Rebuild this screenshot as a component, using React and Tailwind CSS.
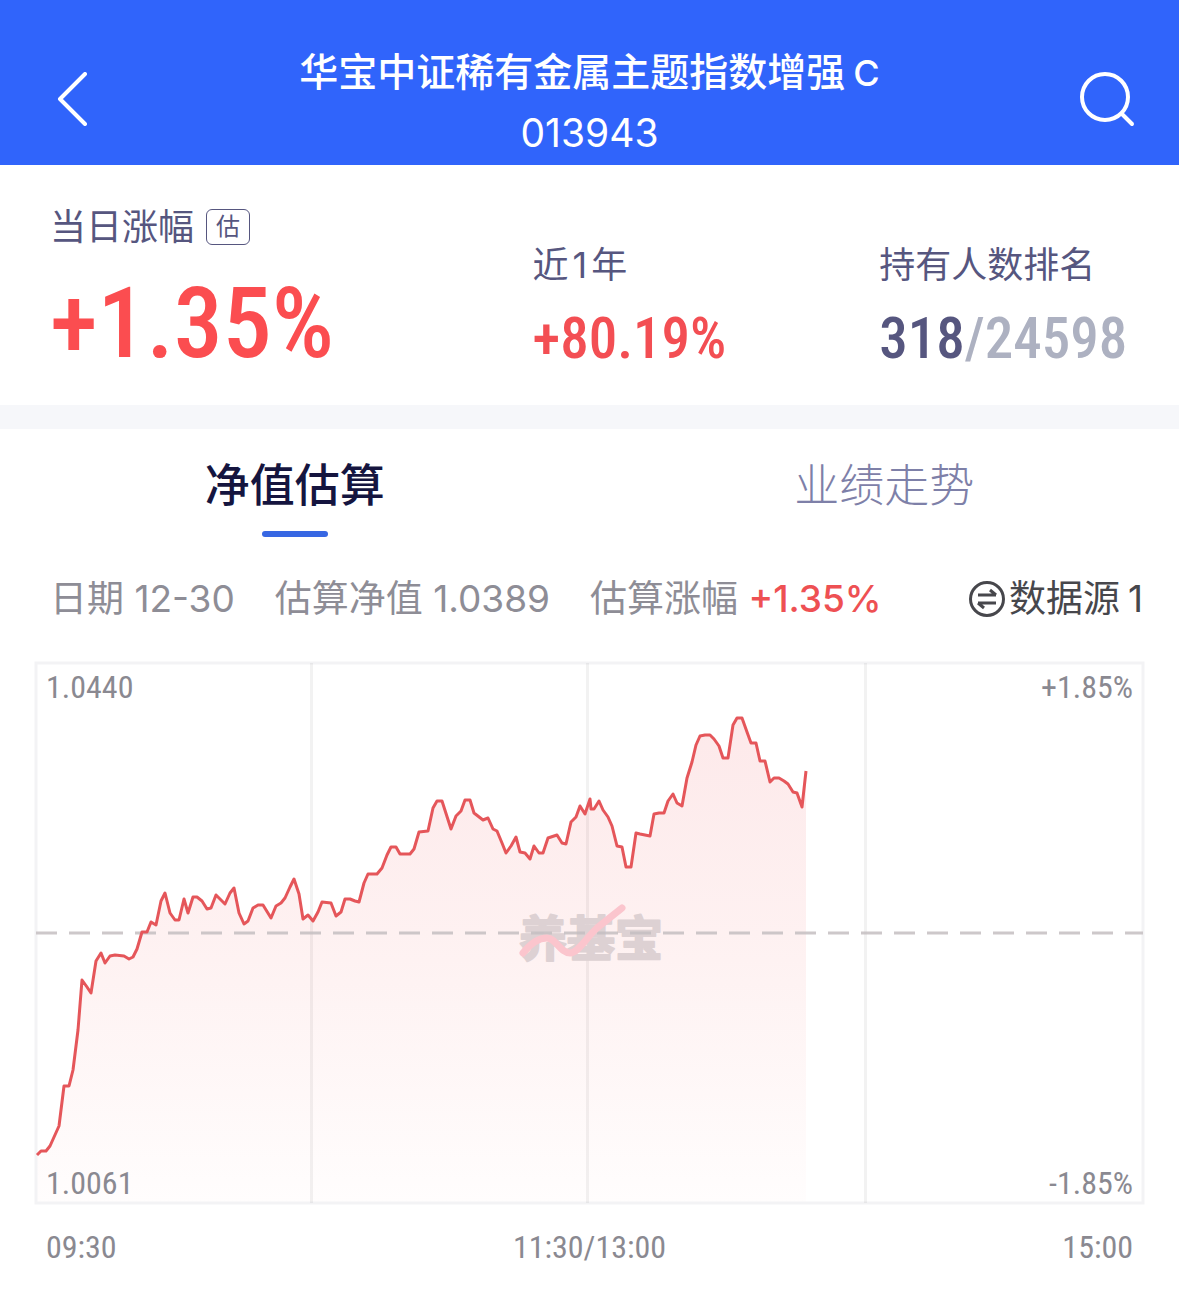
import React, { useState } from 'react'

const TABS = ['净值估算', '业绩走势']

// [x, y] samples of the intraday estimate
const POINTS = [
  [37, 1155], [41, 1151], [46, 1151], [50, 1146], [59, 1126], [64, 1086], [69, 1086], [73, 1070], [78, 1030], [82, 980],
  [87, 987], [91, 993], [96, 961], [101, 953], [105, 963], [110, 956], [115, 955], [124, 956], [129, 959], [133, 957],
  [137, 949], [142, 932], [147, 932], [151, 922], [156, 925], [161, 901], [165, 893], [170, 913], [175, 920], [179, 920],
  [184, 899], [188, 913], [193, 897], [197, 897], [202, 901], [207, 909], [211, 908], [216, 895], [225, 904], [230, 893],
  [234, 888], [239, 913], [244, 924], [248, 921], [253, 908], [258, 905], [263, 905], [271, 918], [276, 906], [281, 903],
  [285, 898], [290, 887], [294, 879], [299, 894], [303, 919], [308, 915], [313, 921], [318, 912], [322, 902], [331, 903],
  [336, 916], [341, 912], [345, 899], [350, 899], [355, 901], [359, 902], [364, 883], [368, 874], [377, 874], [382, 868],
  [387, 855], [391, 847], [396, 847], [400, 854], [410, 854], [414, 849], [419, 832], [428, 831], [433, 808], [437, 801],
  [442, 801], [451, 829], [456, 816], [461, 811], [465, 800], [470, 800], [474, 813], [483, 820], [488, 818], [493, 829],
  [497, 831], [502, 843], [506, 853], [511, 846], [516, 837], [520, 852], [525, 853], [530, 859], [534, 846], [539, 853],
  [543, 853], [548, 838], [557, 835], [562, 843], [566, 844], [571, 822], [576, 817], [580, 806], [585, 814], [590, 799],
  [591, 809], [594, 809], [599, 801], [603, 810], [608, 817], [612, 826], [617, 846], [622, 847], [626, 867], [631, 867],
  [636, 833], [640, 834], [645, 835], [650, 836], [654, 814], [659, 813], [664, 813], [668, 801], [673, 794], [677, 803],
  [682, 806], [687, 778], [692, 762], [696, 745], [700, 736], [705, 735], [710, 735], [714, 739], [719, 746], [723, 758],
  [728, 758], [733, 725], [737, 718], [742, 718], [747, 732], [751, 743], [756, 743], [760, 761], [765, 761], [770, 782],
  [774, 778], [779, 778], [784, 781], [788, 784], [793, 792], [797, 793], [802, 807], [806, 771],
]

const EstimateChart = () => {
  const line = POINTS.map(([x, y]) => `${x},${y}`).join(' ')

  return (
    <svg className="block w-full h-auto" viewBox="34 661 1111 544" fill="none">
      <defs>
        <linearGradient id="area" x1="0" y1="718" x2="0" y2="1203" gradientUnits="userSpaceOnUse">
          <stop offset="0" stopColor="#fde9ea" />
          <stop offset="0.5" stopColor="#fef2f2" />
          <stop offset="1" stopColor="#fffdfd" />
        </linearGradient>
      </defs>
      <polygon points={`37,1203 ${line} 806,1203`} fill="url(#area)" />

      {/* Grid */}
      <rect x="36" y="663" width="1107" height="540" stroke="#f3f3f5" strokeWidth="3" />
      <path d="M311.500 663V1203M587.500 663V1203M865.500 663V1203" stroke="#000" strokeOpacity="0.05" strokeWidth="3" />

      {/* Watermark */}
      <text
        x="519"
        y="956"
        className="font-['Noto_Sans_CJK_SC',sans-serif] font-bold text-[48px]"
        fill="#ddd1d3"
        stroke="#ddd1d3"
        strokeWidth="2"
        strokeLinejoin="round"
      >
        养基宝
      </text>
      <path d="M36 933H1143" stroke="#c4bec1" strokeOpacity="0.85" strokeWidth="3" strokeDasharray="21 12" />
      <path d="M523 953Q535 938 547 938C556 938 560 953 570 953C578 953 586 938 597 928L622 908" stroke="#fbc5cd" strokeWidth="7" strokeLinecap="round" />

      <polyline points={line} stroke="#e5565a" strokeWidth="3" strokeLinejoin="round" />
    </svg>
  )
}

const App = () => {
  const [tab, setTab] = useState(TABS[0])

  return (
    <div className="min-h-screen bg-white font-['Inter','Noto_Sans_CJK_SC',sans-serif]">
      {/* Header */}
      <header className="flex items-center justify-between h-[165px] pt-8 px-11 bg-[#3064fb] text-white">
        <button type="button" aria-label="返回" className="p-3">
          <svg className="w-8 h-[54px]" viewBox="0 0 32 54" fill="none" stroke="currentColor" strokeWidth="4" strokeLinecap="round" strokeLinejoin="round">
            <path d="M29 2L4 27L29 52" />
          </svg>
        </button>
        <div className="pt-2 text-center">
          <h1 className="text-[39px] leading-[60px] font-medium">
            华宝中证稀有金属主题指数增强<span className="ml-2 text-[36px]">C</span>
          </h1>
          <p className="text-[39px] leading-[60px]">013943</p>
        </div>
        <button type="button" aria-label="搜索">
          <svg className="w-14 h-14" viewBox="0 0 56 56" fill="none" stroke="currentColor" strokeWidth="4" strokeLinecap="round">
            <circle cx="26" cy="26" r="23" />
            <path d="M43 43L53 53" />
          </svg>
        </button>
      </header>

      {/* Summary */}
      <section className="grid grid-cols-[483fr_347fr_250fr] items-end px-[50px] pt-8 pb-[14px] text-[36px] text-[#56567f]">
        <div>
          <div className="flex items-center gap-3 leading-[60px]">
            当日涨幅
            <span className="flex items-center justify-center w-11 h-9 border border-[#56567f] rounded-md text-[24px]">估</span>
          </div>
          <div className="font-['Roboto_Condensed','Roboto',sans-serif] font-medium text-[98px] leading-[134px] text-[#fb4d50]">+1.35%</div>
        </div>
        <div className="pb-2">
          <div className="leading-[60px]">
            近<span className="mx-1">1</span>年
          </div>
          <div className="font-['Roboto_Condensed','Roboto',sans-serif] font-medium text-[57px] leading-[88px] text-[#f34e53]">+80.19%</div>
        </div>
        <div className="pb-2">
          <div className="leading-[60px] whitespace-nowrap">持有人数排名</div>
          <div className="font-['Roboto_Condensed','Roboto',sans-serif] font-medium text-[57px] leading-[88px] whitespace-nowrap">
            318<span className="text-[#adb1c1]">/24598</span>
          </div>
        </div>
      </section>

      <div className="h-6 bg-[#f6f7fa]" />

      {/* Tabs */}
      <div role="tablist" className="grid grid-cols-2 pt-6">
        {TABS.map((name) => (
          <button
            key={name}
            type="button"
            role="tab"
            aria-selected={tab === name}
            onClick={() => setTab(name)}
            className={`flex flex-col items-center text-[45px] leading-[66px] ${tab === name ? 'font-medium text-[#15153f]' : 'font-light text-[#7e80a8]'}`}
          >
            {name}
            <span className={`w-[66px] h-1.5 mt-3 rounded-full ${tab === name ? 'bg-[#3767e3]' : ''}`} />
          </button>
        ))}
      </div>

      {/* Estimate info */}
      <div className="flex items-center pt-8 pl-[50px] pr-9 gap-10 text-[37px] leading-[60px] text-[#8e8d96] whitespace-nowrap">
        <span>日期 12-30</span>
        <span>估算净值 1.0389</span>
        <span>
          估算涨幅 <span className="font-medium text-[#ee5053]">+1.35%</span>
        </span>
        <button type="button" className="flex items-center gap-1 ml-auto text-[#47474c]">
          <svg className="w-9 h-9" viewBox="0 0 36 36" fill="none" stroke="currentColor" strokeWidth="3">
            <circle cx="18" cy="18" r="16.500" />
            <path d="M9 14H27M21 9L27 14M27 22H9M15 27L9 22" />
          </svg>
          <span>
            数据源<span className="ml-2">1</span>
          </span>
        </button>
      </div>

      {/* Chart */}
      <div className="px-[34px] pt-8 font-['Roboto_Condensed','Roboto',sans-serif] text-[32px] leading-[44px] text-[#8a8991]">
        <div className="relative">
          <EstimateChart />
          <span className="absolute left-3 top-1">1.0440</span>
          <span className="absolute right-3 top-1">+1.85%</span>
          <span className="absolute left-3 bottom-0">1.0061</span>
          <span className="absolute right-3 bottom-0">-1.85%</span>
        </div>
        <div className="flex justify-between px-3 pt-5">
          <span>09:30</span>
          <span>11:30/13:00</span>
          <span>15:00</span>
        </div>
      </div>
    </div>
  )
}

export default App
